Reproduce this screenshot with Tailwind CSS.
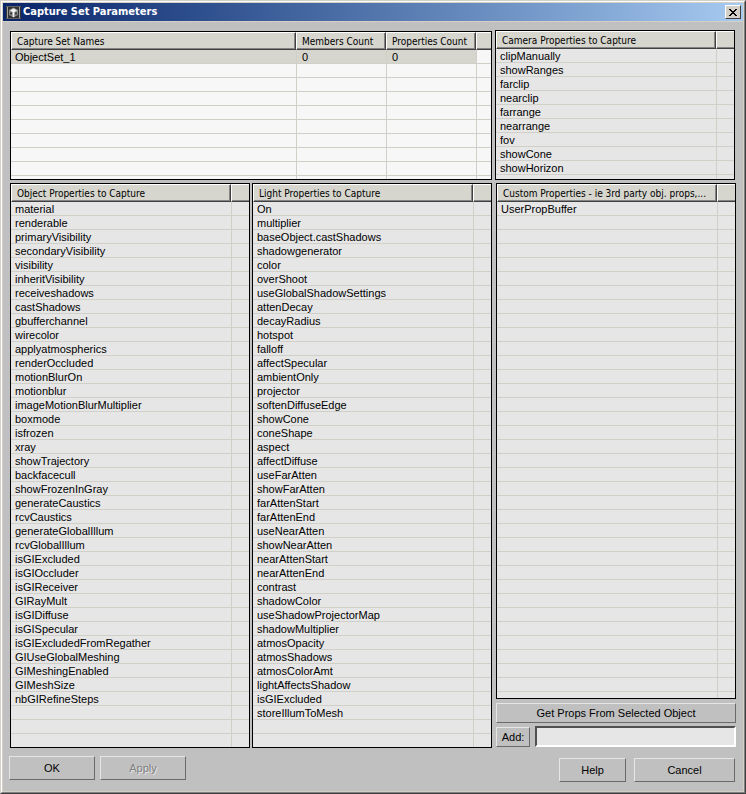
<!DOCTYPE html>
<html lang="en">
<head>
<meta charset="utf-8">
<title>Capture Set Parameters</title>
<script src="https://cdn.jsdelivr.net/npm/@tailwindcss/browser@4"></script>
</head>
<body class="bg-[#c0c0c0] text-[11px] leading-[14px] text-black font-['Liberation_Sans',Arial,sans-serif]">
<div class="min-h-screen border border-t-[#d4d0c8] border-l-[#d4d0c8] border-r-[#404040] border-b-[#404040]">
<div class="flex min-h-[calc(100vh-2px)] flex-col border border-t-white border-l-white border-r-[#808080] border-b-[#808080]">
<main class="flex grow flex-col border border-[#d4d0c8]">
  <header class="flex h-[19px] items-center border-b border-[#d4d0c8] bg-linear-to-r from-[#0a246a] to-[#a6caf0] pl-[3px] pr-[2px]">
    <svg class="mr-[2px] h-[13px] w-[15px] shrink-0" viewBox="0 0 15 13" aria-hidden="true">
      <rect width="15" height="13" fill="#333"/>
      <path d="M1.500 1v11M13.500 1v11" stroke="#a0a0a0"/>
      <path d="M0 .5h15M0 12.500h15" stroke="#606060"/>
      <path d="M7.500 1.500L12 4v5l-4.500 2.500L3 9V4z" fill="#8a8a8a"/>
      <path d="M4 4.500L7.500 2.500L11 4.500L7.500 6.500z" fill="#f4f4f4"/>
      <path d="M5 6.500v2M10 6.500v2" stroke="#222" stroke-width="1.500"/>
      <path d="M7.500 5v6" stroke="#f4f4f4" stroke-width="1.500"/>
    </svg>
    <h1 class="grow text-[11px] leading-[16px] font-bold text-white font-['DejaVu_Sans_Condensed',Tahoma,sans-serif]">Capture Set Parameters</h1>
    <button aria-label="Close" class="flex h-[14px] w-[16px] items-center justify-center border border-t-white border-l-white border-r-[#404040] border-b-[#404040] bg-[#d4d0c8]">
      <svg class="h-[7px] w-[8px]" viewBox="0 0 8 7" aria-hidden="true" shape-rendering="crispEdges"><path d="M0 0h2v1h1v1h2v-1h1v-1h2v1h-1v1h-1v1h-1v1h1v1h1v1h1v1h-2v-1h-1v-1h-2v1h-1v1h-2v-1h1v-1h1v-1h1v-1h-1v-1h-1v-1h-1z"/></svg>
    </button>
  </header>

  <div class="grid grid-cols-[482fr_240fr] items-end gap-x-[3px] pt-[8px] pl-[7px] pr-[8px]">
    <div data-list="sets"></div>
    <div data-list="camera"></div>
  </div>

  <div class="grid grid-cols-[240fr_240fr_242fr] gap-x-[2px] pt-[3px] pl-[7px] pr-[7px]">
    <div data-list="object"></div>
    <div data-list="light"></div>
    <div class="flex flex-col pl-[2px]">
      <div data-list="custom"></div>
      <button class="mt-[4px] h-[20px] w-full border border-t-[#e6e6e6] border-l-[#e6e6e6] border-r-[#6a6a6a] border-b-[#6a6a6a]">Get Props From Selected Object</button>
      <div class="mt-[3px] flex items-center gap-[5px]">
        <button id="add" class="h-[20px] w-[34px] border border-t-[#e6e6e6] border-l-[#e6e6e6] border-r-[#6a6a6a] border-b-[#6a6a6a]">Add:</button>
        <input type="text" aria-labelledby="add" class="h-[21px] min-w-0 grow border-2 border-t-[#505050] border-l-[#505050] border-r-white border-b-white bg-[#e6e6e6] px-1">
      </div>
    </div>
  </div>

  <footer class="flex items-start justify-between pt-[8px] pb-[9px] pl-[6px] pr-[8px]">
    <div class="flex gap-[5px]">
      <button class="h-[24px] w-[86px] border border-t-[#e6e6e6] border-l-[#e6e6e6] border-r-[#6a6a6a] border-b-[#6a6a6a]">OK</button>
      <button disabled class="h-[24px] w-[86px] border border-t-[#e6e6e6] border-l-[#e6e6e6] border-r-[#6a6a6a] border-b-[#6a6a6a] text-[#808080] text-shadow-[1px_1px_0_#e6e6e6]">Apply</button>
    </div>
    <div class="flex gap-[8px] pt-[2px]">
      <button class="h-[24px] w-[67px] border border-t-[#e6e6e6] border-l-[#e6e6e6] border-r-[#6a6a6a] border-b-[#6a6a6a]">Help</button>
      <button class="h-[24px] w-[101px] border border-t-[#e6e6e6] border-l-[#e6e6e6] border-r-[#6a6a6a] border-b-[#6a6a6a]">Cancel</button>
    </div>
  </footer>
</main>
</div>
</div>

<script>
const one = text => text.split(' ').map(name => [name]);
// rows: number of grid lines drawn; rest: class for the partly visible last row
const lists = {
  sets: {
    head: ['Capture Set Names', 'Members Count', 'Properties Count'],
    cols: ['w-auto', 'w-[90px]', 'w-[90px]', 'w-[15px]'],
    data: [['ObjectSet_1', '0', '0']], rows: 9, rest: 'h-[3px]', bg: 'bg-[#f7f7f7]', selected: 0
  },
  camera: {
    head: ['Camera Properties to Capture'], cols: ['w-auto', 'w-[18px]'],
    data: one('clipManually showRanges farclip nearclip farrange nearrange fov showCone showHorizon'),
    rows: 9, rest: 'h-[4px]', bg: 'bg-[#e6e6e6]'
  },
  object: {
    head: ['Object Properties to Capture'], cols: ['w-auto', 'w-[18px]'],
    data: one('material renderable primaryVisibility secondaryVisibility visibility inheritVisibility receiveshadows castShadows gbufferchannel wirecolor applyatmospherics renderOccluded motionBlurOn motionblur imageMotionBlurMultiplier boxmode isfrozen xray showTrajectory backfacecull showFrozenInGray generateCaustics rcvCaustics generateGlobalIllum rcvGlobalIllum isGIExcluded isGIOccluder isGIReceiver GIRayMult isGIDiffuse isGISpecular isGIExcludedFromRegather GIUseGlobalMeshing GIMeshingEnabled GIMeshSize nbGIRefineSteps'),
    rows: 38, rest: 'h-[13px]', bg: 'bg-[#e6e6e6]'
  },
  light: {
    head: ['Light Properties to Capture'], cols: ['w-auto', 'w-[18px]'],
    data: one('On multiplier baseObject.castShadows shadowgenerator color overShoot useGlobalShadowSettings attenDecay decayRadius hotspot falloff affectSpecular ambientOnly projector softenDiffuseEdge showCone coneShape aspect affectDiffuse useFarAtten showFarAtten farAttenStart farAttenEnd useNearAtten showNearAtten nearAttenStart nearAttenEnd contrast shadowColor useShadowProjectorMap shadowMultiplier atmosOpacity atmosShadows atmosColorAmt lightAffectsShadow isGIExcluded storeIllumToMesh'),
    rows: 38, rest: 'h-[13px]', bg: 'bg-[#e6e6e6]'
  },
  custom: {
    head: ['Custom Properties - ie 3rd party obj. props,...'], cols: ['w-auto', 'w-[18px]'],
    data: one('UserPropBuffer'), rows: 35, rest: 'h-[6px]', bg: 'bg-[#e6e6e6]'
  }
};
for (const host of document.querySelectorAll('[data-list]')) {
  const l = lists[host.dataset.list];
  const last = l.cols.length - 1;
  const side = i => i > 0 ? 'border-l' : '';
  let html = `<table class="w-full table-fixed border-separate border-spacing-0 border border-black ${l.bg}"><colgroup>`;
  html += l.cols.map(w => `<col class="${w}">`).join('') + '</colgroup><thead><tr>';
  html += l.cols.map((_, i) => i < last
    ? `<th class="h-[18px] p-0 text-left font-normal"><div class="h-[18px] border border-t-white border-l-white border-r-[#404040] border-b-[#404040] bg-[#d6d6ce] pl-[5px] text-[10px] leading-[17px] whitespace-nowrap shadow-[inset_-1px_-1px_0_#848484] font-['DejaVu_Sans_Condensed',Tahoma,sans-serif]">${l.head[i]}</div></th>`
    : '<td class="h-[18px] p-0"><div class="h-[18px] border-t border-b border-l border-t-white border-l-white border-b-[#404040] bg-[#d6d6ce] shadow-[inset_0_-1px_0_#848484]"></div></td>').join('');
  html += '</tr></thead><tbody>';
  for (let r = 0; r < l.rows; r++) {
    html += '<tr>' + l.cols.map((_, i) => {
      const text = (l.data[r] || [])[i] || '';
      if (i === last) return '<td class="h-[14px] border-b border-l border-[#d0d0c8] p-0"></td>';
      return `<td class="h-[14px] ${side(i)} border-b border-[#d0d0c8] p-0 ${r === l.selected ? 'bg-[#d6d6ce]' : ''}"><div class="h-[13px] ${i > 0 ? 'pl-[5px]' : 'pl-[4px]'} leading-[15px] whitespace-nowrap">${text}</div></td>`;
    }).join('') + '</tr>';
  }
  html += '<tr>' + l.cols.map((_, i) => `<td class="${l.rest} ${side(i)} border-[#d0d0c8] p-0"></td>`).join('') + '</tr>';
  host.innerHTML = html + '</tbody></table>';
}
</script>
</body>
</html>
